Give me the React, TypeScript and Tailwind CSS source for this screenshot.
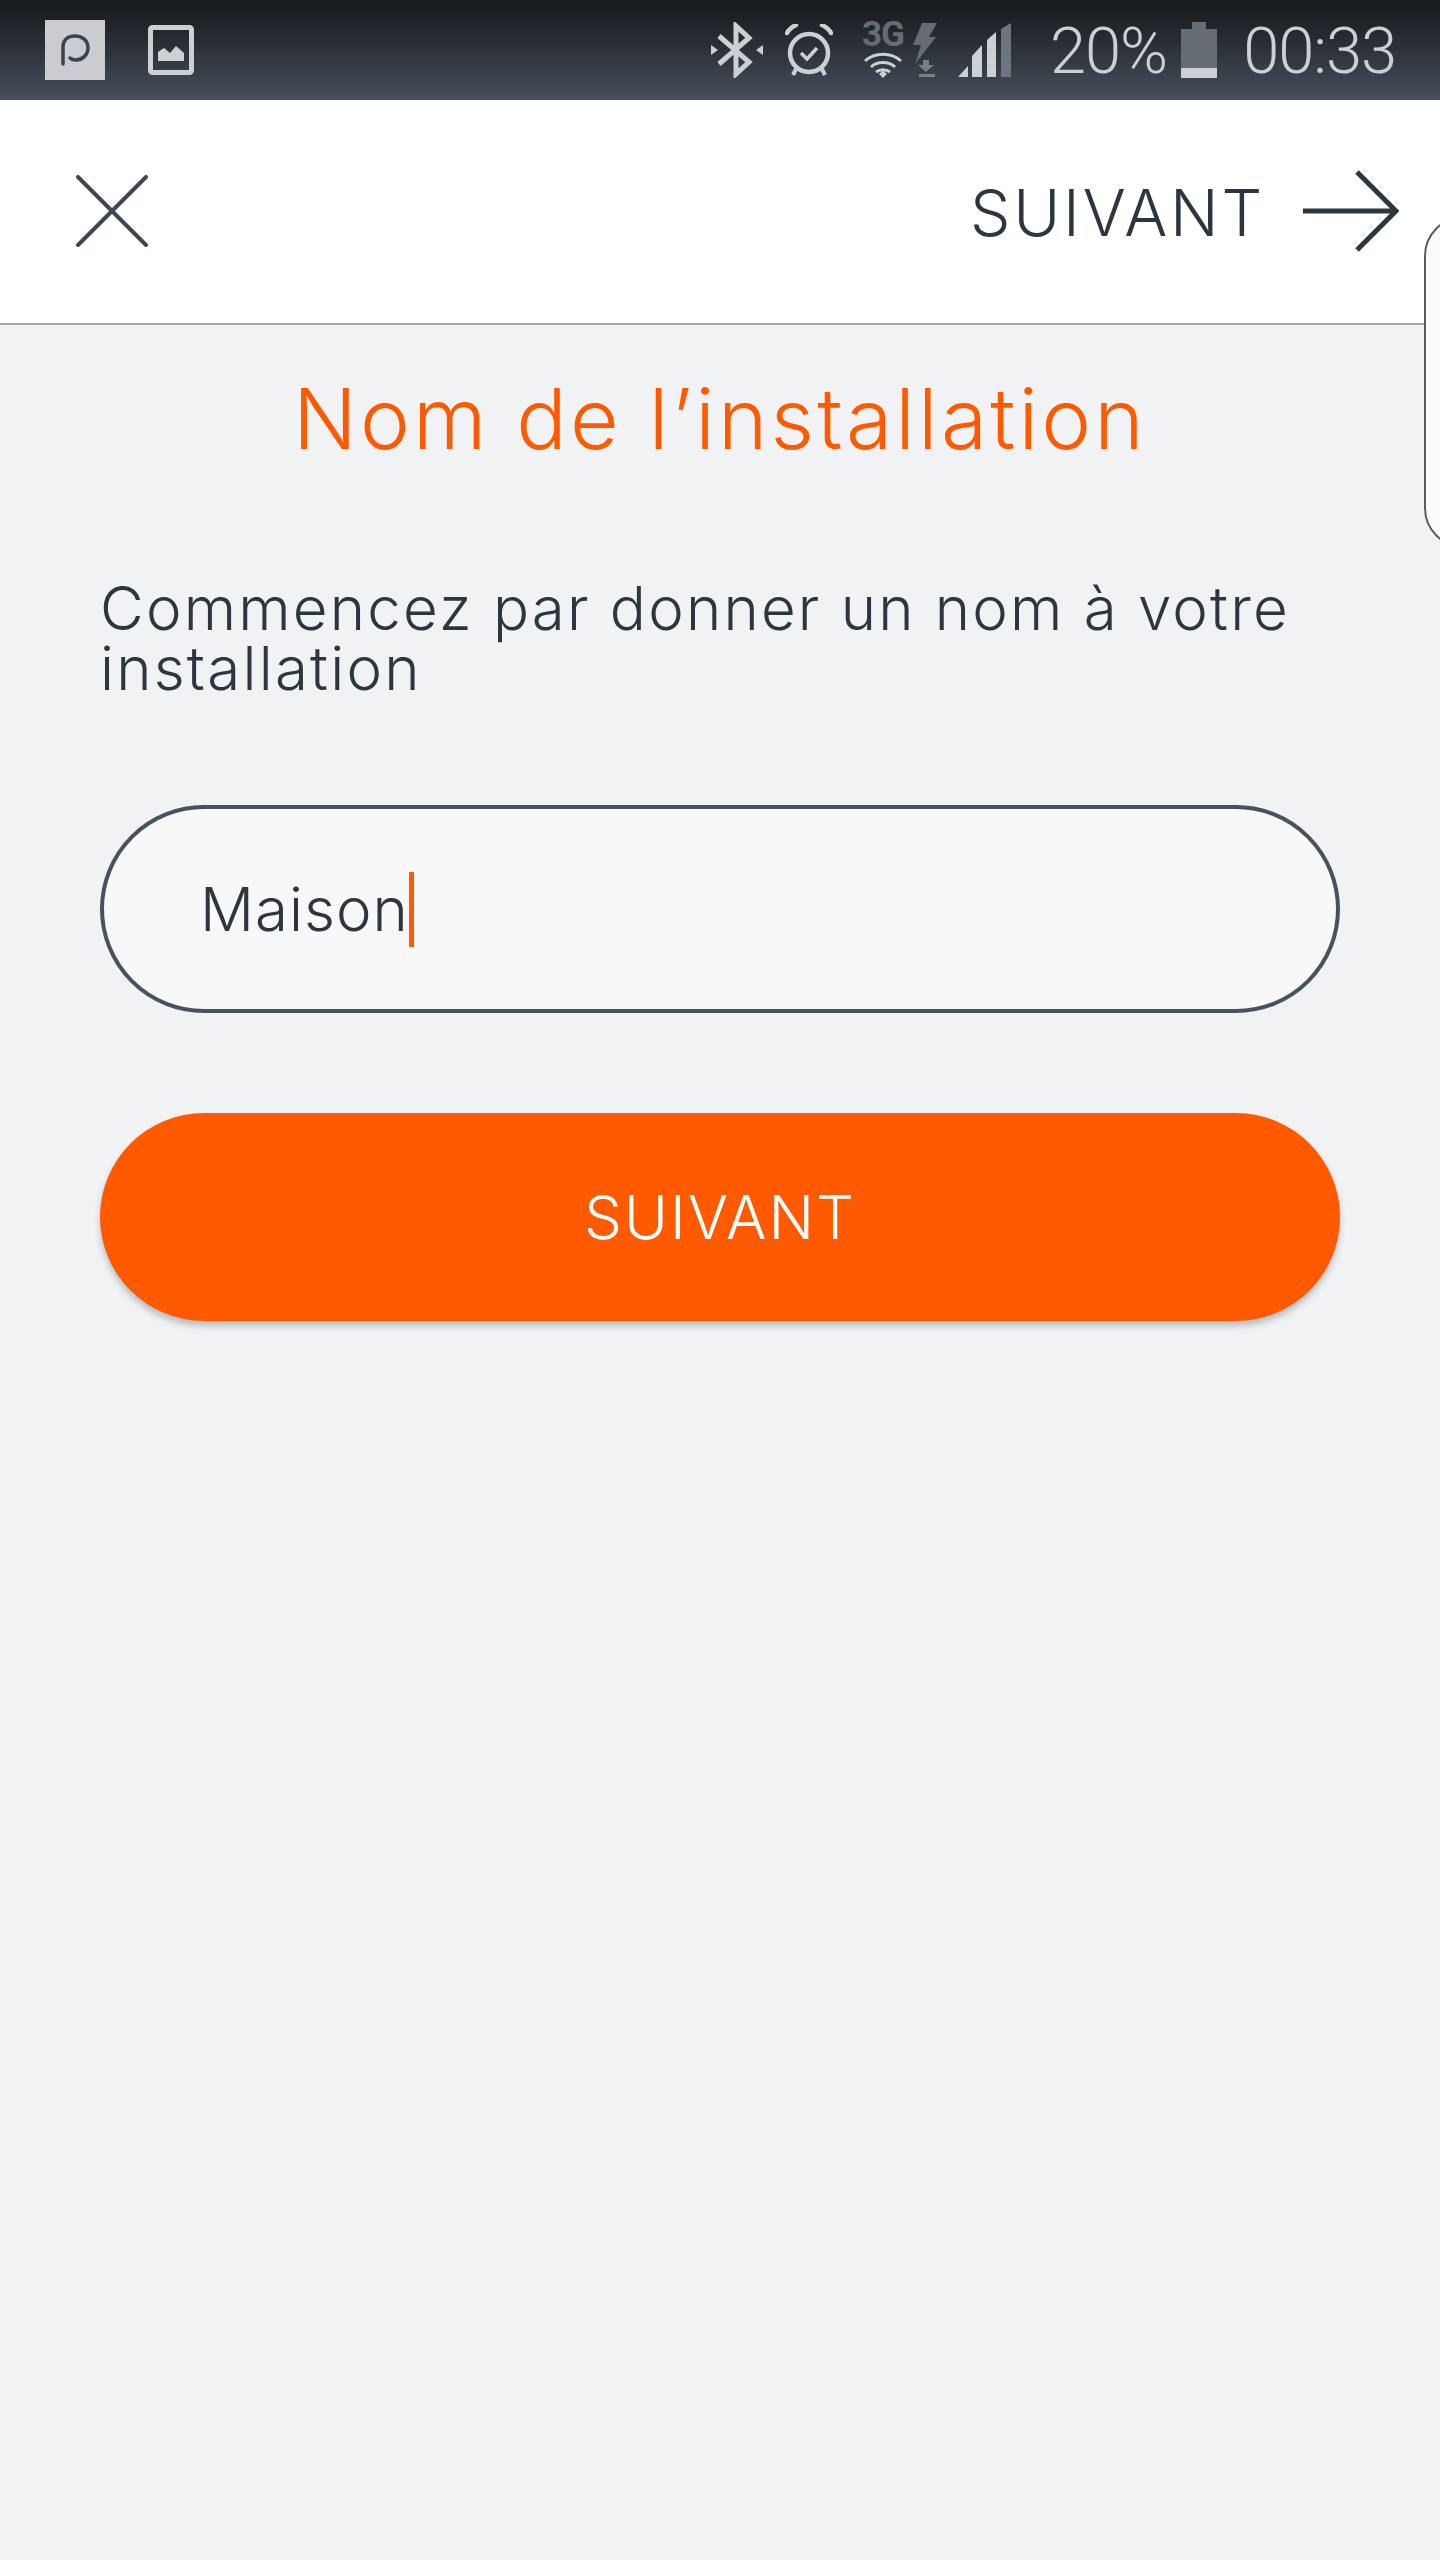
export default function App() {
  return (
    <div className="relative w-[1440px] h-[2560px] overflow-hidden bg-[#f1f2f4] font-['Inter',sans-serif] font-light text-[#2c3641]">
      <div className="h-[100px] flex items-center bg-gradient-to-b from-[#1a1d21] from-10% to-[#46505b] font-['Roboto',sans-serif] text-[#cdd0d3]">
        <div className="ml-[45px] w-[60px] h-[60px] bg-[#cacccf] flex items-center justify-center">
          <svg width="60" height="60" viewBox="0 0 60 60" fill="none" stroke="#3a4350" strokeWidth="3.5" strokeLinecap="round">
            <path d="M18 44 L18 27 C18 19 24 16 30 16 C38 16 43 21 43 28 C43 35 37 40 31 40 C28.5 40 26.5 39.5 25 38" />
          </svg>
        </div>
        <svg className="ml-[43px]" width="46" height="50" viewBox="0 0 46 50">
          <rect x="2.5" y="2.5" width="41" height="45" rx="2" fill="none" stroke="#cdd0d3" strokeWidth="5" />
          <path d="M10 36 V27 L16 23 L22 28 L28 21 L36 28 V36 Z" fill="#cdd0d3" />
        </svg>
        <div className="flex-1" />
        <svg width="52" height="56" viewBox="0 0 52 56" fill="none" stroke="#cdd0d3" strokeWidth="5">
          <path d="M8 14 L38 40 L25 52 V4 L38 16 L8 42" />
          <path d="M0 23 L7 28 L0 33 Z M52 23 L45 28 L52 33 Z" fill="#cdd0d3" stroke="none" />
        </svg>
        <svg className="ml-[22px]" width="48" height="52" viewBox="0 0 48 52" fill="none" stroke="#cdd0d3" strokeWidth="4.5">
          <circle cx="24" cy="29" r="19" />
          <path d="M16 29 L22 35 L32 24" strokeWidth="3.5" />
          <path d="M2 9 C4 5 7 3 11 1 M37 1 C41 3 44 5 46 9" strokeLinecap="round" />
          <path d="M11 45 L8 51 M37 45 L40 51" strokeWidth="4" />
        </svg>
        <div className="ml-[29px] w-[42px] h-[56px] flex flex-col items-center">
          <span className="text-[#666c73] text-[35px] font-bold leading-[26px] tracking-[-1px]">3G</span>
          <svg className="mt-[4px]" width="38" height="26" viewBox="0 0 38 26" fill="none" stroke="#cdd0d3" strokeWidth="3">
            <path d="M1 9 C11 0 27 0 37 9 M7 15 C13 9 25 9 31 15 M12 20 C16 17 22 17 26 20" />
            <path d="M15 22 L19 18.5 L23 22 L19 26 Z" fill="#cdd0d3" stroke="none" />
          </svg>
        </div>
        <svg className="ml-[9px]" width="24" height="54" viewBox="0 0 24 54">
          <path d="M9 0 H24 L16 14 H23 L2 41 L8 22 H0 Z" fill="#666c73" />
          <path d="M10 37 H16 V42 H21 L13 49 L5 42 H10 Z" fill="#7a8087" />
          <rect x="6" y="51" width="16" height="3" fill="#7a8087" />
        </svg>
        <svg className="ml-[21px]" width="53" height="54" viewBox="0 0 53 54">
          <path d="M0 54 L10 43 V54 Z M14 54 V33 L24 22 V54 Z M29 54 V17 L38 9 V54 Z" fill="#cdd0d3" />
          <path d="M43 54 V6 L53 0 V54 Z" fill="#6d747b" />
        </svg>
        <span className="ml-[39px] text-[65px] leading-none tracking-[-1px] mt-[3px]">20%</span>
        <div className="ml-[14px] w-[36px] h-[56px] flex flex-col items-center">
          <div className="w-[14px] h-[7px] bg-[#666c73]" />
          <div className="w-[36px] flex-1 bg-[#666c73] flex flex-col justify-end">
            <div className="h-[10px] bg-[#cdd0d3]" />
          </div>
        </div>
        <span className="ml-[26px] mr-[44px] text-[65px] leading-none tracking-[-1px] mt-[3px]">00:33</span>
      </div>

      <div className="h-[225px] bg-white border-b-2 border-[#a5aaaf] flex items-center justify-between pl-[76px] pr-[41px]">
        <svg className="-mt-[1px]" width="72" height="72" viewBox="0 0 72 72" fill="none" stroke="#3d4852" strokeWidth="4" strokeLinecap="round">
          <path d="M2 2 L70 70 M70 2 L2 70" />
        </svg>
        <div className="flex items-center -mt-[1px]">
          <span className="text-[64px] leading-none tracking-[2.8px] mt-[4px]">SUIVANT</span>
          <svg className="ml-[38px]" width="96" height="82" viewBox="0 0 96 82" fill="none" stroke="#2c3641" strokeWidth="5">
            <path d="M0 41 H93 M54 2 L93 41 L54 80" />
          </svg>
        </div>
      </div>

      <div className="flex flex-col px-[100px]">
        <h1 className="mt-[48px] text-center text-[#ff5a00] text-[84px] leading-[92px] tracking-[3.2px] font-light">Nom de l’installation</h1>
        <p className="mt-[113px] text-[60px] leading-[60px] tracking-[2.2px]">Commencez par donner un nom à votre installation</p>
        <div className="mt-[107px] h-[208px] rounded-[104px] border-4 border-[#46525f] bg-[#f8f8f8] flex items-center pl-[96px]">
          <span className="text-[60px] leading-none tracking-[1px]">Maison</span>
          <span className="w-[5px] h-[75px] bg-[#ff5a00]" />
        </div>
        <button className="mt-[100px] h-[208px] rounded-[104px] bg-[#ff5a00] text-white text-[60px] tracking-[2px] shadow-[0_5px_6px_rgba(60,70,80,0.3)]">SUIVANT</button>
      </div>

      <div className="absolute left-[1424px] top-[216px] w-[60px] h-[332px] rounded-l-[40px] border-2 border-[#5a5d60] bg-[#fbfbfb]" />
    </div>
  );
}
